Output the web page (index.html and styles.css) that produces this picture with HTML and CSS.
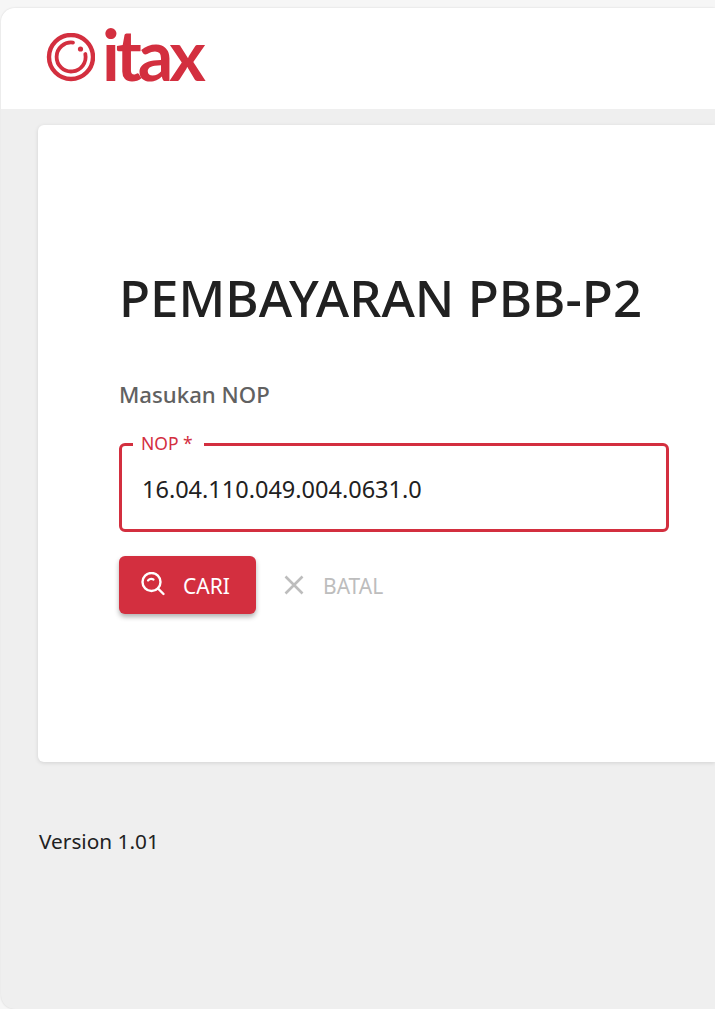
FILE: index.html
```html
<!DOCTYPE html>
<html>
<head>
<title>Pembayaran PBB-P2</title>
<meta charset="UTF-8">
<link rel="stylesheet" href="styles.css">
</head>

<body>

<div class="appFrame">

  <div class="topBar">
    <div class="logo">
      <svg class="logoMark" width="50" height="50" viewBox="0 0 50 50">
        <circle cx="26" cy="24" r="22" fill="none" stroke="#d32f3f" stroke-width="4.4"/>
        <path d="M28 9.6 A14.5 14.5 0 1 0 40.3 21" fill="none" stroke="#d32f3f" stroke-width="3.8" stroke-linecap="round"/>
        <circle cx="35.5" cy="16" r="2.6" fill="#d32f3f"/>
      </svg>
      <span class="logoText">itax</span>
    </div>
  </div>

  <div class="content">
    <div class="card">
      <h1 class="pageTitle">PEMBAYARAN PBB-P2</h1>
      <div class="subTitle">Masukan NOP</div>

      <fieldset class="nopField">
        <legend class="nopLegend">NOP *</legend>
        <input class="nopInput" type="text" value="16.04.110.049.004.0631.0">
      </fieldset>

      <div class="actions">
        <button class="actionBtn cariBtn">
          <svg width="26" height="26" viewBox="0 0 26 26">
            <circle cx="11.5" cy="10" r="9" fill="none" stroke="#fff" stroke-width="2.4"/>
            <path d="M8 8.5 A4.5 4.5 0 0 1 13.5 7.5" fill="none" stroke="#fff" stroke-width="2.2" stroke-linecap="round"/>
            <path d="M18 16.5 L23.5 22" fill="none" stroke="#fff" stroke-width="2.4" stroke-linecap="round"/>
          </svg>
          <span class="btnLabel">CARI</span>
        </button>
        <button class="actionBtn batalBtn" disabled>
          <svg width="20" height="20" viewBox="0 0 20 20">
            <path d="M1.5 1.5 L18.5 18.5 M18.5 1.5 L1.5 18.5" fill="none" stroke="#bdbdbd" stroke-width="2.6"/>
          </svg>
          <span class="btnLabel">BATAL</span>
        </button>
      </div>
    </div>

    <div class="version">Version 1.01</div>
  </div>

</div>

</body>
</html>
```

FILE: styles.css
```css
html, body {
  margin: 0;
  padding: 0;
  height: 100%;
  overflow: hidden;
  background-color: #f6f6f6;
  font-family: "Noto Sans", "Open Sans", sans-serif;
}

.appFrame {
  box-sizing: border-box;
  margin-top: 8px;
  margin-left: 1px;
  height: 1001px;
  border-radius: 14px 0 0 14px;
  background-color: #efefef;
  overflow: hidden;
  box-shadow: 0 0 2px rgba(0,0,0,0.15);
}

/* header */
.topBar {
  height: 101px;
  background-color: #fff;
  display: flex;
  align-items: center;
}

.logo {
  display: flex;
  align-items: center;
  padding-left: 45px;
  margin-top: -2px;
  color: #d32f3f;
}

.logoMark {
  display: block;
  margin-left: -1px;
}

.logoText {
  font-family: "Lato", sans-serif;
  font-weight: 700;
  font-size: 70px;
  line-height: 50px;
  letter-spacing: -4px;
  margin-left: 7px;
  margin-top: -7px;
}

/* main */
.content {
  padding: 16px 0 0 37px;
}

.card {
  box-sizing: border-box;
  height: 637px;
  padding: 137px 0 0 81px;
  background-color: #fff;
  border-radius: 6px 0 0 6px;
  box-shadow: 0 1px 4px rgba(0,0,0,0.12);
}

.pageTitle {
  margin: 0;
  font-size: 51px;
  line-height: 70px;
  font-weight: 500;
  color: #212121;
}

.subTitle {
  margin-top: 48px;
  font-size: 22.2px;
  line-height: 30px;
  font-weight: 500;
  color: #616161;
}

.nopField {
  box-sizing: border-box;
  width: 550px;
  height: 98px;
  margin: 24px 0 0 0;
  padding: 0 20px;
  border: 3px solid #d32f3f;
  border-radius: 6px;
}

.nopLegend {
  margin-left: -9px;
  padding: 0 11px 0 8px;
  font-size: 17.5px;
  line-height: 18px;
  height: 20px;
  color: #d32f3f;
}

.nopInput {
  display: block;
  width: 100%;
  margin-top: 17px;
  padding: 0;
  border: none;
  outline: none;
  background: transparent;
  font-family: inherit;
  font-size: 23.5px;
  line-height: 36px;
  color: #212121;
}

.actions {
  display: flex;
  align-items: center;
  gap: 16px;
  margin-top: 24px;
}

.actionBtn {
  display: flex;
  align-items: center;
  height: 58px;
  border: none;
  border-radius: 6px;
  background: transparent;
  font-family: inherit;
  font-size: 21px;
}

.btnLabel {
  padding-top: 2px;
}

.cariBtn {
  width: 137px;
  padding: 0 0 0 21px;
  gap: 17px;
  background-color: #d32f3f;
  color: #fff;
  box-shadow: 0 3px 5px rgba(0,0,0,0.3);
}

.batalBtn {
  padding: 0 12px;
  gap: 19px;
  color: #bdbdbd;
}

.version {
  margin-top: 65px;
  margin-left: 1px;
  font-size: 20.8px;
  line-height: 28px;
  color: #212121;
}
```
